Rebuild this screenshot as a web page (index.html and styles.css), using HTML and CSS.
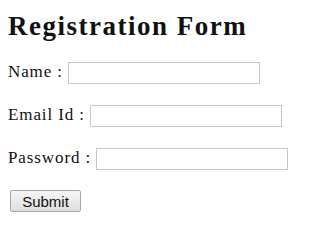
FILE: index.html
```html
<!DOCTYPE html>
<html lang="en">
<head>
    <meta charset="UTF-8">
    <title>Registration Form</title>
    <link rel="stylesheet" href="styles.css">
</head>
<body>
    <h1 class="form-title">Registration Form</h1>
    <form class="reg-form" onsubmit="return false;">
        <p class="form-row">Name : <input type="text" name="name"></p>
        <p class="form-row">Email Id : <input type="text" name="email"></p>
        <p class="form-row">Password : <input type="password" name="password"></p>
        <p class="form-row"><button type="submit" class="submit-btn">Submit</button></p>
    </form>
</body>
</html>
```

FILE: styles.css
```css
body {
    font-family: "Liberation Serif", "Times New Roman", serif;
    font-size: 17px;
    letter-spacing: 0.9px;
    color: #111111;
    margin: 0;
    padding: 8px;
    background: #ffffff;
}

.form-title {
    font-size: 27px;
    letter-spacing: 1.5px;
    margin: 3px 0 19px 0;
}

.form-row {
    margin: 0 0 21px 0;
    height: 22px;
    line-height: 22px;
}

.form-row input {
    width: 186px;
    height: 18px;
    padding: 1px 2px;
    border: 1px solid #c8c8c8;
    vertical-align: middle;
    font-family: inherit;
}

.submit-btn {
    font-family: "Liberation Sans", Arial, sans-serif;
    font-size: 15px;
    letter-spacing: 0;
    margin-left: 2px;
    width: 71px;
    height: 22px;
    border: 1px solid #a8a8a8;
    border-radius: 2px;
    background: linear-gradient(#f6f6f6, #dedede);
    color: #111111;
}
```
